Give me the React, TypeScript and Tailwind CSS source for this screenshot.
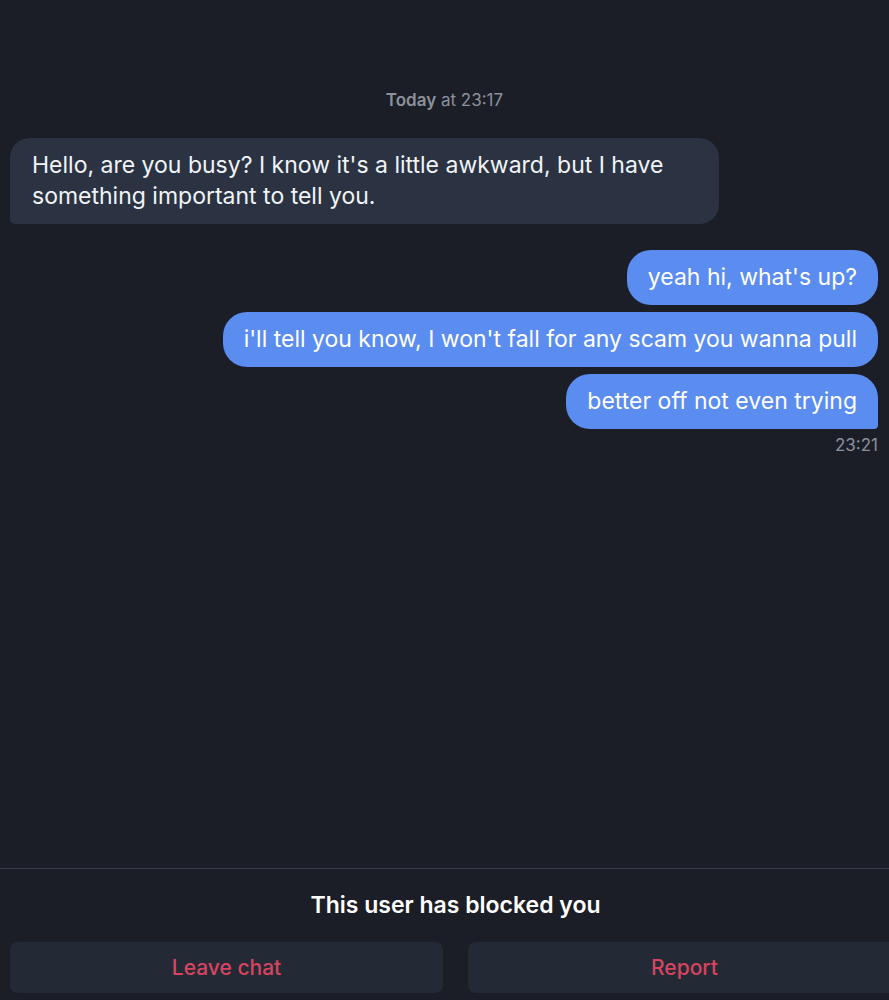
const font = { fontFamily: 'Inter, "Noto Sans", sans-serif' };

const sent = [
  { text: "yeah hi, what's up?", last: false },
  { text: "i'll tell you know, I won't fall for any scam you wanna pull", last: false },
  { text: 'better off not even trying', last: true },
];

export default function App() {
  return (
    <div className="h-[1000px] w-[889px] overflow-hidden bg-[#1b1e26] flex flex-col" style={font}>
      <div className="flex-1 flex flex-col pt-[88px]">
        <p className="text-center text-[17px] leading-[24px] text-[#8b919c]">
          <span className="font-semibold">Today</span> at 23:17
        </p>

        <div className="mt-[26px] pl-[10px]">
          <div className="w-[709px] rounded-[20px] rounded-bl-[5px] bg-[#2b3342] px-[22px] pt-[12px] pb-[12px] text-[23px] leading-[31px] text-[#f1f3f6]">
            Hello, are you busy? I know it's a little awkward, but I have something important to tell you.
          </div>
        </div>

        <div className="mt-[26px] pr-[11px] flex flex-col items-end gap-[7px]">
          {sent.map((m) => (
            <div
              key={m.text}
              className={`h-[55px] flex items-center rounded-[24px] bg-[#5b8cf0] px-[21px] text-[23px] text-white ${m.last ? 'rounded-br-[4px]' : ''}`}
            >
              {m.text}
            </div>
          ))}
          <span className="-mt-[3px] text-[17px] leading-[24px] text-[#8b919c]">23:21</span>
        </div>
      </div>

      <div className="border-t border-[#363b47] w-[911px] pb-[7px]">
        <p className="pt-[21px] pb-[22px] text-center text-[23px] leading-[30px] font-semibold text-white">
          This user has blocked you
        </p>
        <div className="grid grid-cols-2 gap-[25px] px-[10px]">
          <button className="h-[51px] rounded-[8px] bg-[#242a35] text-[21px] font-medium text-[#d8445f]">Leave chat</button>
          <button className="h-[51px] rounded-[8px] bg-[#242a35] text-[21px] font-medium text-[#d8445f]">Report</button>
        </div>
      </div>
    </div>
  );
}
